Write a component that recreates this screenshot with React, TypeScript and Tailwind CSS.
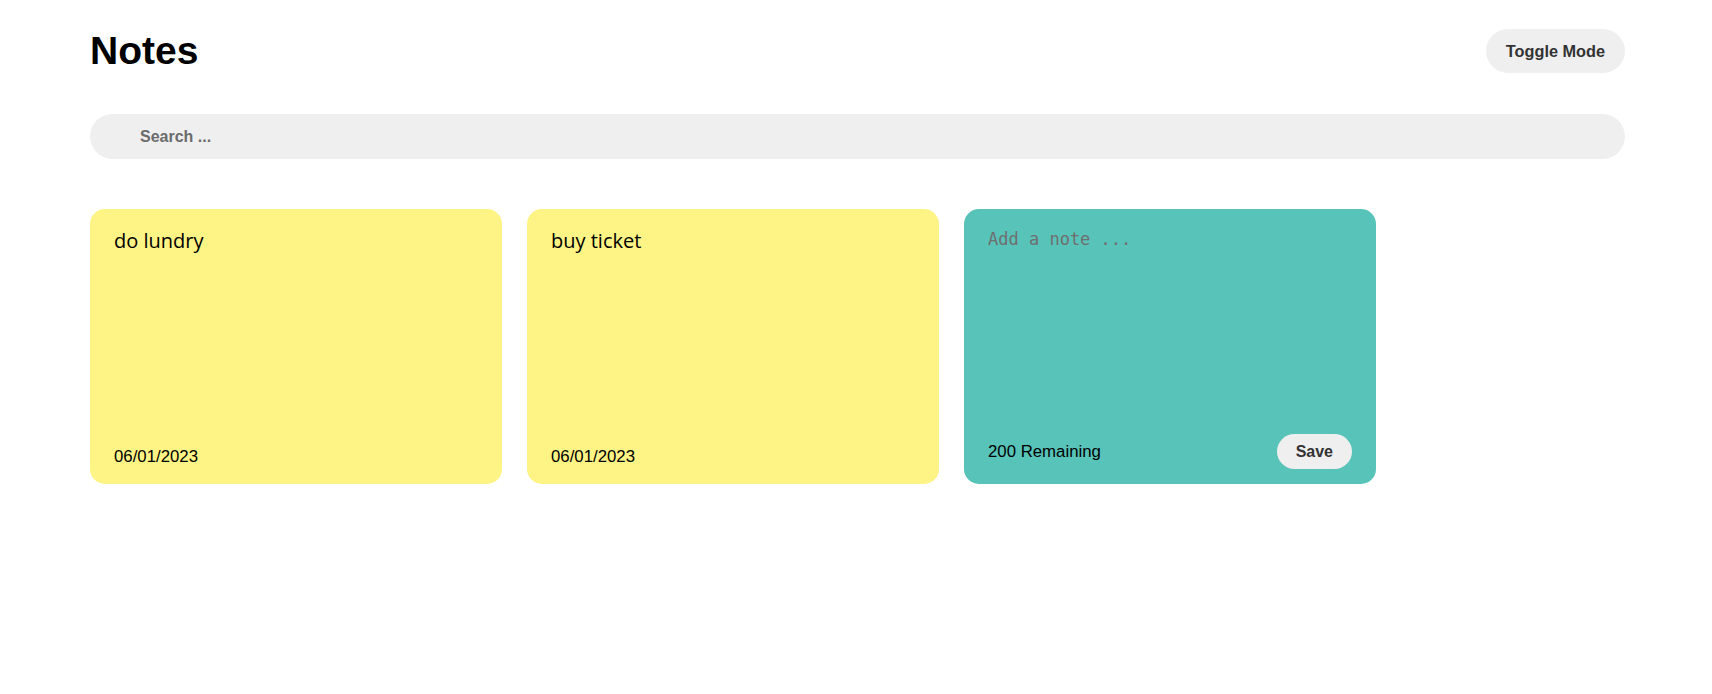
import React, { useState } from "react";

interface NoteData {
  id: number;
  text: string;
  date: string;
}

const NoteCard: React.FC<{ note: NoteData }> = ({ note }) => {
  return (
    <div className="w-[412px] h-[275px] bg-[#fef485] rounded-[15px] px-6 pt-[17px] pb-[15px] flex flex-col justify-between">
      <span className="font-['Open_Sans',sans-serif] text-[20px] text-black">
        {note.text}
      </span>
      <div className="font-['Liberation_Sans',Arial,sans-serif] text-[16.8px] text-black">
        {note.date}
      </div>
    </div>
  );
};

const AddNote: React.FC = () => {
  const [text, setText] = useState("");
  const limit = 200;

  return (
    <div className="w-[412px] h-[275px] bg-[#57c3b9] rounded-[15px] px-6 pt-[18px] pb-[15px] flex flex-col justify-between">
      <textarea
        rows={7}
        value={text}
        onChange={(e) => setText(e.target.value.slice(0, limit))}
        placeholder="Add a note ..."
        className="bg-transparent border-none outline-none resize-none flex-1 font-['DejaVu_Sans_Mono',monospace] text-[17px] text-black placeholder:text-[#6f6f6f]"
      />
      <div className="flex items-center justify-between font-['Liberation_Sans',Arial,sans-serif]">
        <span className="text-[16.8px] text-black">
          {limit - text.length} Remaining
        </span>
        <button className="h-[35px] px-[19px] rounded-full bg-[#efefef] text-[16px] font-bold text-[#333]">
          Save
        </button>
      </div>
    </div>
  );
};

const notes: NoteData[] = [
  { id: 1, text: "do lundry", date: "06/01/2023" },
  { id: 2, text: "buy ticket", date: "06/01/2023" },
];

export default function App() {
  return (
    <div className="min-h-screen bg-white font-['Liberation_Sans',Arial,sans-serif]">
      <div className="pl-[90px] pr-[87px] pt-[21px]">
        {/* Header */}
        <div className="flex items-center justify-between h-[60px]">
          <h1 className="text-[39px] font-bold text-black leading-[60px]">
            Notes
          </h1>
          <button className="h-[44px] px-[20px] rounded-full bg-[#efefef] text-[16.3px] font-bold text-[#333]">
            Toggle Mode
          </button>
        </div>

        {/* Search */}
        <div className="mt-[33px] h-[45px] rounded-full bg-[#efefef] flex items-center pl-[50px]">
          <input
            type="text"
            placeholder="Search ..."
            className="bg-transparent border-none outline-none w-full text-[16px] font-bold text-[#333] placeholder:text-[#6b6b6b]"
          />
        </div>

        {/* Notes list */}
        <div className="mt-[50px] flex flex-wrap gap-[25px]">
          {notes.map((note) => (
            <NoteCard key={note.id} note={note} />
          ))}
          <AddNote />
        </div>
      </div>
    </div>
  );
}
